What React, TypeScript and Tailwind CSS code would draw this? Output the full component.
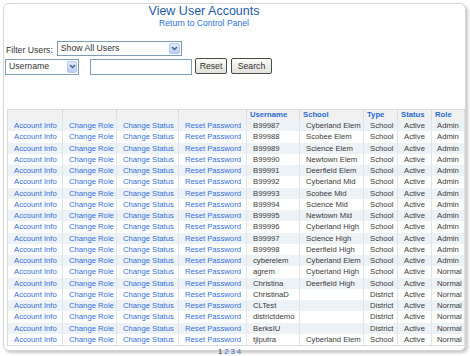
import React from 'react';

const rows: [string, string, string, string, string][] = [
  ['B99987', 'Cyberland Elem', 'School', 'Active', 'Admin'],
  ['B99988', 'Scobee Elem', 'School', 'Active', 'Admin'],
  ['B99989', 'Science Elem', 'School', 'Active', 'Admin'],
  ['B99990', 'Newtown Elem', 'School', 'Active', 'Admin'],
  ['B99991', 'Deerfield Elem', 'School', 'Active', 'Admin'],
  ['B99992', 'Cyberland Mid', 'School', 'Active', 'Admin'],
  ['B99993', 'Scobee Mid', 'School', 'Active', 'Admin'],
  ['B99994', 'Science Mid', 'School', 'Active', 'Admin'],
  ['B99995', 'Newtown Mid', 'School', 'Active', 'Admin'],
  ['B99996', 'Cyberland High', 'School', 'Active', 'Admin'],
  ['B99997', 'Science High', 'School', 'Active', 'Admin'],
  ['B99998', 'Deerfield High', 'School', 'Active', 'Admin'],
  ['cyberelem', 'Cyberland Elem', 'School', 'Active', 'Admin'],
  ['agrem', 'Cyberland High', 'School', 'Active', 'Normal'],
  ['Christina', 'Deerfield High', 'School', 'Active', 'Normal'],
  ['ChristinaD', '', 'District', 'Active', 'Normal'],
  ['CLTest', '', 'District', 'Active', 'Normal'],
  ['districtdemo', '', 'District', 'Active', 'Normal'],
  ['BerksIU', '', 'District', 'Active', 'Normal'],
  ['tjiputra', 'Cyberland Elem', 'School', 'Active', 'Normal'],
];

const cols = 'grid grid-cols-[55px_54px_62px_68px_53px_64px_34px_34px_34px]';

function Arrow({ className }: { className: string }) {
  return (
    <span
      className={`flex items-center justify-center rounded-[2px] border border-[#b6c8ee] bg-gradient-to-b from-[#e3ebfd] to-[#b9cdf6] ${className}`}
    >
      <svg width="7" height="5" viewBox="0 0 7 5">
        <path d="M1 1 L3.5 3.5 L6 1" fill="none" stroke="#4d6185" strokeWidth="1.4" />
      </svg>
    </span>
  );
}

function Cell({ children, link, last }: { children: React.ReactNode; link?: boolean; last?: boolean }) {
  return (
    <div
      className={`overflow-hidden whitespace-nowrap ${last ? 'pl-[5px]' : 'border-r border-[#e1e5ea] pl-[6px]'} ${
        link ? 'text-[#3470da]' : 'text-[#3a3a3a]'
      }`}
    >
      {children}
    </div>
  );
}

export default function App() {
  return (
    <div className="h-[356px] w-[470px] bg-white pl-[3px] pt-[3px] font-['Liberation_Sans',Arial,sans-serif]">
      <div className="flex h-[348px] w-[463px] flex-col rounded-[6px] border border-[#d6d6d6] bg-white shadow-[2px_2px_3px_rgba(0,0,0,0.22)]">
        <div className="w-[400px] text-center">
          <div className="text-[12.5px] leading-[14px] text-[#1f5aa6]">View User Accounts</div>
          <div className="text-[8.6px] leading-[10px] text-[#2c72d6]">Return to Control Panel</div>
        </div>

        <div className="mt-[12px] flex items-center pl-[2px] text-[8.7px] text-[#333]">
          <span className="pt-[4px]">Filter Users:</span>
          <div className="ml-[4px] flex h-[15px] w-[125px] items-center justify-between border border-[#7f9db9] bg-white pl-[3px] pr-[1px]">
            <span>Show All Users</span>
            <Arrow className="h-[11px] w-[11px]" />
          </div>
        </div>

        <div className="mt-[1px] flex items-center pl-[1px] text-[8.7px] text-[#333]">
          <div className="flex h-[16px] w-[74px] items-center justify-between border border-[#7f9db9] bg-white pl-[3px] pr-[1px]">
            <span>Username</span>
            <Arrow className="h-[12px] w-[10px]" />
          </div>
          <div className="ml-[11px] h-[16px] w-[102px] border border-[#7f9db9] bg-white" />
          <button className="mb-[1px] ml-[3px] h-[16px] w-[32px] rounded-[2px] border border-[#4a4a4a] bg-gradient-to-b from-[#fbfbf8] to-[#e2e1da] text-center leading-[14px]">
            Reset
          </button>
          <button className="mb-[1px] ml-[4px] h-[16px] w-[41px] rounded-[2px] border border-[#4a4a4a] bg-gradient-to-b from-[#fbfbf8] to-[#e2e1da] text-center leading-[14px]">
            Search
          </button>
        </div>

        <div className="ml-[3px] mt-[34px] w-[458px] border border-[#dcdcdc] text-[7.7px] leading-[11.25px]">
          <div className={`${cols} h-[10px] bg-[#f1f1f1] font-bold leading-[10px] text-[#2a6bd1]`}>
            <div className="border-r border-dotted border-[#cfcfcf]" />
            <div className="border-r border-dotted border-[#cfcfcf]" />
            <div className="border-r border-dotted border-[#cfcfcf]" />
            <div className="border-r border-dotted border-[#cfcfcf]" />
            <div className="border-r border-[#dcdcdc] pl-[3px]">Username</div>
            <div className="border-r border-[#dcdcdc] pl-[3px]">School</div>
            <div className="border-r border-[#dcdcdc] pl-[3px]">Type</div>
            <div className="border-r border-[#dcdcdc] pl-[3px]">Status</div>
            <div className="pl-[3px]">Role</div>
          </div>
          {rows.map((r, i) => (
            <div key={i} className={`${cols} h-[11.25px] ${i % 2 === 0 ? 'bg-[#edf2f7]' : 'bg-white'}`}>
              <Cell link>Account Info</Cell>
              <Cell link>Change Role</Cell>
              <Cell link>Change Status</Cell>
              <Cell link>Reset Password</Cell>
              <Cell>{r[0]}</Cell>
              <Cell>{r[1]}</Cell>
              <Cell>{r[2]}</Cell>
              <Cell>{r[3]}</Cell>
              <Cell last>{r[4]}</Cell>
            </div>
          ))}
        </div>

        <div className="mt-[1px] flex justify-center gap-[2px] pr-[10px] text-[7.7px] leading-[9px]">
          <span className="text-[#333]">1</span>
          <span className="text-[#3470da]">2</span>
          <span className="text-[#3470da]">3</span>
          <span className="text-[#3470da]">4</span>
        </div>
      </div>
    </div>
  );
}
